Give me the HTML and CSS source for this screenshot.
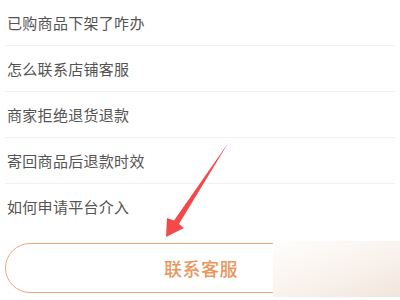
FILE: index.html
```html
<!DOCTYPE html>
<html>
<head>
    <meta charset="utf-8">
    <title>帮助</title>
    <link rel="stylesheet" href="styles.css">
</head>
<body>
    <div class="page">
        <ul class="faq">
            <li class="faq-item">已购商品下架了咋办</li>
            <li class="faq-item">怎么联系店铺客服</li>
            <li class="faq-item">商家拒绝退货退款</li>
            <li class="faq-item">寄回商品后退款时效</li>
            <li class="faq-item">如何申请平台介入</li>
        </ul>

        <div class="wrap-btn">
            <button type="button" class="btn">联系客服</button>
        </div>

        <!-- annotation arrow -->
        <svg class="arrow" width="400" height="300" viewBox="0 0 400 300">
            <polygon points="166,237 167,218 174,220.5 228.5,142.5 179,224 184,228" fill="#f24a4a"/>
        </svg>
        <div class="mark"></div>
    </div>
</body>
</html>
```

FILE: styles.css
```css
html,
body {
    margin: 0;
    height: 100%;
    background: #fff;
    overflow: hidden;
}
.page {
    position: relative;
    width: 400px;
    height: 300px;
    font-family: "Noto Sans CJK SC", "Noto Sans", sans-serif;
}
.faq {
    list-style: none;
    margin: 0;
    padding: 0 5px;
}
.faq-item {
    height: 45px;
    line-height: 45px;
    padding-left: 2px;
    font-size: 15px;
    letter-spacing: 0.3px;
    color: #545454;
    border-bottom: 1px solid #f2f2f2;
}
.faq-item:last-child {
    border-bottom: none;
}
.wrap-btn {
    padding: 14px 5px 0;
}
.btn {
    display: block;
    width: 100%;
    height: 50px;
    border: 1.5px solid #f0a47c;
    border-radius: 25px;
    background: #fff;
    color: #e9955c;
    font-family: "Noto Sans CJK SC", sans-serif;
    font-size: 18px;
    font-weight: 500;
    letter-spacing: 0.5px;
    padding: 0 0 0 2px;
}
.arrow {
    position: absolute;
    top: 0;
    left: 0;
}
.mark {
    position: absolute;
    left: 273px;
    top: 241px;
    width: 127px;
    height: 56px;
    background: linear-gradient(160deg, #fefefd 0%, #f9f2ec 55%, #f1e5dc 100%);
}
```
